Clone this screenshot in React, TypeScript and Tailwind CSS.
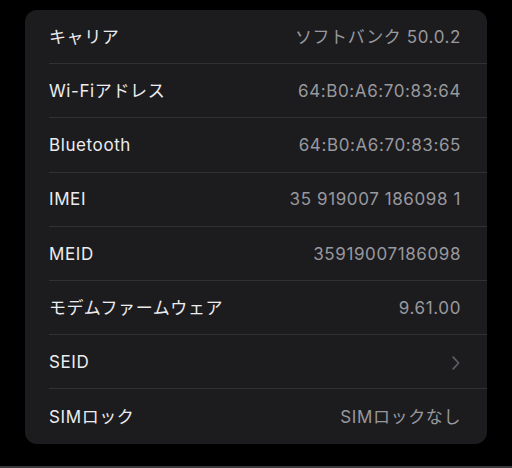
const ROWS: { label: string; value?: string; chevron?: boolean }[] = [
  { label: 'キャリア', value: 'ソフトバンク 50.0.2' },
  { label: 'Wi-Fiアドレス', value: '64:B0:A6:70:83:64' },
  { label: 'Bluetooth', value: '64:B0:A6:70:83:65' },
  { label: 'IMEI', value: '35 919007 186098 1' },
  { label: 'MEID', value: '35919007186098' },
  { label: 'モデムファームウェア', value: '9.61.00' },
  { label: 'SEID', chevron: true },
  { label: 'SIMロック', value: 'SIMロックなし' },
]

function Chevron() {
  return (
    <svg width="8" height="14" viewBox="0 0 8 14" fill="none" className="mr-px text-[#5b5b60]">
      <path d="M1.2 1.2 L6.6 7 L1.2 12.8" stroke="currentColor" strokeWidth="1.8" strokeLinecap="round" strokeLinejoin="round" />
    </svg>
  )
}

export default function App() {
  return (
    <div
      className="flex h-[468px] w-[512px] flex-col bg-black"
      style={{ fontFamily: 'Inter, "Noto Sans CJK JP", sans-serif' }}
    >
      <div className="ml-[25px] mt-[10px] w-[462px] overflow-hidden rounded-[12px] bg-[#1c1c1e]">
        {ROWS.map((row, i) => (
          <div key={row.label} className="pl-[24px]">
            <div
              className={`flex h-[54.2px] items-center justify-between pr-[26px] pt-[2px] ${
                i < ROWS.length - 1 ? 'border-b border-[#313134]' : ''
              }`}
            >
              <span className="text-[17px] tracking-[0.6px] text-[#ececf0]">{row.label}</span>
              {row.chevron ? (
                <Chevron />
              ) : (
                <span className="text-[17px] tracking-[0.6px] text-[#98989e]">{row.value}</span>
              )}
            </div>
          </div>
        ))}
      </div>
      <div className="flex-1" />
      <div className="h-[2px] bg-[#3a3a3c]" />
    </div>
  )
}
